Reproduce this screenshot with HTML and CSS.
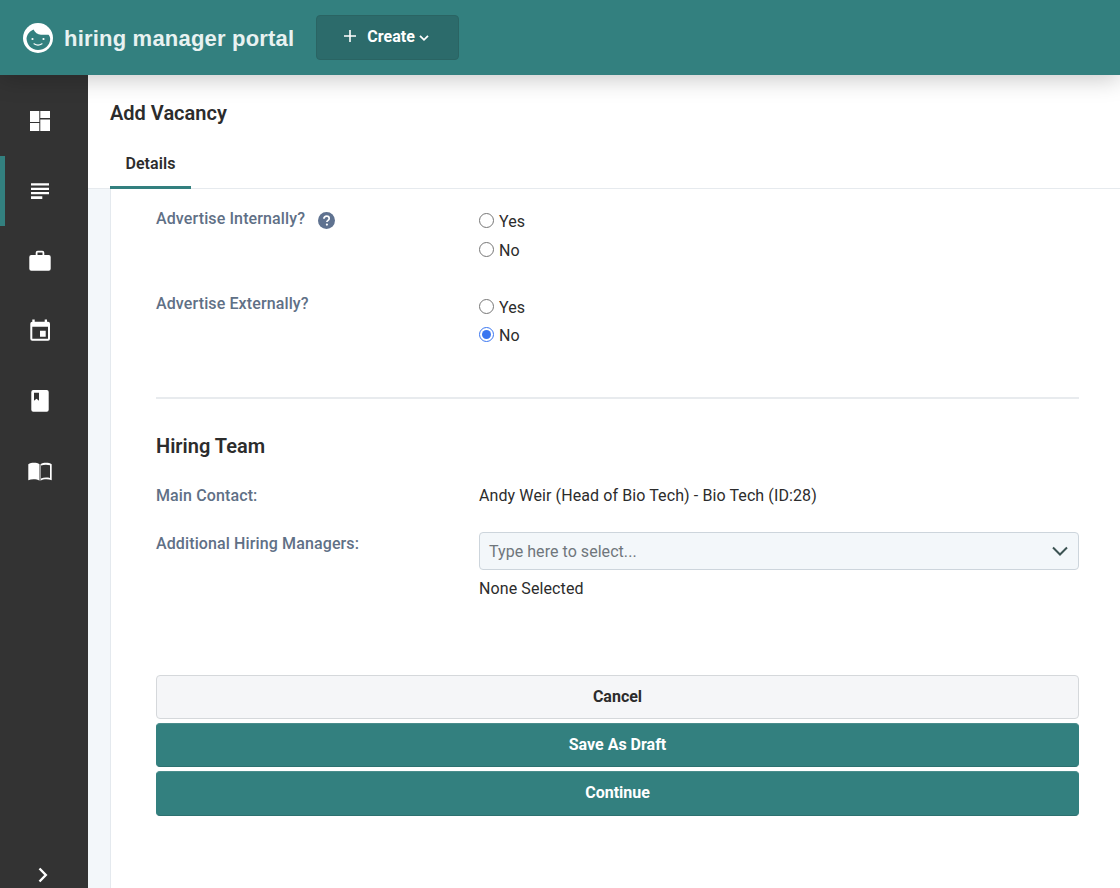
FILE: index.html
```html
<!DOCTYPE html>
<html lang="en">
<head>
<meta charset="utf-8">
<title>Add Vacancy</title>
<link rel="stylesheet" href="styles.css">
</head>
<body>
<header class="topbar">
  <div class="brand">
    <svg class="logo" viewBox="0 0 30 30" width="30" height="30" aria-hidden="true">
      <circle cx="15" cy="15" r="15" fill="#fff"/>
      <path d="M3.500 15.500C4 11 7 8 10.500 6.500 12 9.500 14.500 11.500 18 11.800c3 .2 5.500-.2 7.500 0 1.200 1.400 1.700 2.800 1.700 4.200C27 22.500 21.500 27 15 27S3.800 22 3.500 15.500z" fill="#33807f"/>
      <circle cx="9.500" cy="16" r="1.100" fill="#fff"/>
      <circle cx="20.500" cy="16" r="1.100" fill="#fff"/>
      <path d="M11 20.800c2.300 1.500 5.700 1.500 8 0" fill="none" stroke="#fff" stroke-width="1.200" stroke-linecap="round"/>
    </svg>
    <span class="brand-name">hiring manager portal</span>
  </div>
  <button class="create" type="button">
    <svg viewBox="0 0 14 14" width="14" height="14" aria-hidden="true"><path d="M7 1v12M1 7h12" stroke="#fff" stroke-width="1.600" fill="none"/></svg>
    <span>Create</span>
    <svg viewBox="0 0 10 8" width="10" height="8" aria-hidden="true"><path d="M1 1.800l4 4 4-4" stroke="#fff" stroke-width="1.800" fill="none"/></svg>
  </button>
</header>
<div class="shell">
  <nav class="sidebar">
    <a class="nav-item"><svg viewBox="0 0 24 24" width="24" height="24"><path d="M2 2h9.300v11H2zM2 14h9.300v8H2zM12.300 2H22v7h-9.700zM12.300 10.500H22V22h-9.700z" fill="#fff"/></svg></a>
    <a class="nav-item active"><svg viewBox="0 0 24 24" width="24" height="24"><path d="M3 4.300h18v2.200H3zM3 8.700h18v2.200H3zM3 13h18v2.200H3zM3 17.300h11.300v2.700H3z" fill="#fff"/></svg></a>
    <a class="nav-item"><svg viewBox="0 0 24 24" width="24" height="24"><path d="M7.700 6V3.700a2 2 0 0 1 2-2h4.600a2 2 0 0 1 2 2V6h4.400a2 2 0 0 1 2 2v11.700a2 2 0 0 1-2 2H3.300a2 2 0 0 1-2-2V8a2 2 0 0 1 2-2zm1.800 0h5V3.500h-5z" fill="#fff" fill-rule="evenodd"/></svg></a>
    <a class="nav-item"><svg viewBox="0 0 24 24" width="24" height="24"><path d="M4.300.5h2.400v2.200h10V.5H19v2.200h1a2 2 0 0 1 2 2v15a2 2 0 0 1-2 2H4.300a2 2 0 0 1-2-2v-15a2 2 0 0 1 2-2zm0 7.200v12H20v-12zM12 11.700h5.700v6H12z" fill="#fff" fill-rule="evenodd"/></svg></a>
    <a class="nav-item"><svg viewBox="0 0 24 24" width="24" height="24"><path d="M5.300 1h13.400a2 2 0 0 1 2 2v17.700a2 2 0 0 1-2 2H5.300a2 2 0 0 1-2-2V3a2 2 0 0 1 2-2zM6 3.700v8l2.500-2 2.500 2v-8z" fill="#fff" fill-rule="evenodd"/></svg></a>
    <a class="nav-item"><svg viewBox="0 0 24 24" width="24" height="24"><path d="M.3 5.200C3.500 3.300 8.500 3.300 11.500 5.200V21.700C8.500 20 3.500 20 .3 21.300zM12.500 5.200C15.500 3.300 20.500 3.300 23.700 5.200V21.300C20.500 20 15.500 20 12.500 21.700zM13 6.500V19.500C15.500 18.300 19 18.300 22 18.900V6.200C19 5.300 15.500 5.500 13 6.500z" fill="#fff" fill-rule="evenodd"/></svg></a>
    <a class="nav-toggle"><svg viewBox="0 0 12 16" width="12" height="16"><path d="M2.500 1.500l6.300 6.500-6.300 6.500" stroke="#fff" stroke-width="2.400" fill="none"/></svg></a>
  </nav>
  <main class="content">
    <div class="page-head">
      <h1 class="page-title">Add Vacancy</h1>
      <div class="tabs"><a class="tab">Details</a></div>
    </div>
    <div class="page-body">
      <form class="panel">
        <div class="field field-first">
          <div class="label">Advertise Internally?<svg class="help" viewBox="0 0 17 17" width="17" height="17"><circle cx="8.500" cy="8.500" r="8.500" fill="#5f7290"/><path d="M5.900 6.700c0-1.600 1.200-2.500 2.700-2.500s2.600.9 2.600 2.200c0 1.200-.8 1.700-1.500 2.200-.6.400-.8.700-.8 1.300" fill="none" stroke="#fff" stroke-width="1.700"/><circle cx="8.900" cy="12.600" r="1.100" fill="#fff"/></svg></div>
          <div class="radios">
            <label class="radio"><input type="radio" name="internal"> Yes</label>
            <label class="radio"><input type="radio" name="internal"> No</label>
          </div>
        </div>
        <div class="field field-second">
          <div class="label">Advertise Externally?</div>
          <div class="radios">
            <label class="radio"><input type="radio" name="external"> Yes</label>
            <label class="radio"><input type="radio" name="external" checked> No</label>
          </div>
        </div>
        <hr class="divider">
        <h2 class="section-title">Hiring Team</h2>
        <div class="field field-contact">
          <div class="label">Main Contact:</div>
          <div class="value">Andy Weir (Head of Bio Tech) - Bio Tech (ID:28)</div>
        </div>
        <div class="field field-managers">
          <div class="label">Additional Hiring Managers:</div>
          <div class="control">
            <div class="select">
              <span>Type here to select...</span>
              <svg viewBox="0 0 16 10" width="16" height="10"><path d="M1 1.500l7 7 7-7" stroke="#3c5353" stroke-width="2" fill="none"/></svg>
            </div>
            <div class="value none">None Selected</div>
          </div>
        </div>
        <div class="actions">
          <button class="btn btn-light" type="button">Cancel</button>
          <button class="btn btn-primary" type="button">Save As Draft</button>
          <button class="btn btn-primary btn-tall" type="button">Continue</button>
        </div>
      </form>
    </div>
  </main>
</div>
</body>
</html>
```
FILE: styles.css
```css
* { box-sizing: border-box; }
html, body { margin: 0; height: 100%; overflow: hidden; }
body {
  font-family: Roboto, "Liberation Sans", sans-serif;
  font-size: 16px;
  color: #2c2c2c;
  background: #fff;
  display: flex;
  flex-direction: column;
}
.topbar {
  height: 75px;
  flex: none;
  background: #33807f;
  display: flex;
  align-items: center;
  padding-left: 23px;
  box-shadow: 0 4px 22px rgba(0,0,0,.22);
  position: relative;
  z-index: 2;
}
.brand { display: flex; align-items: center; gap: 11px; }
.logo { display: block; }
.brand-name {
  font-family: "Liberation Sans", Arial, sans-serif;
  font-size: 22px;
  font-weight: 700;
  color: #e8f2f1;
  letter-spacing: .2px;
  padding-top: 2px;
}
.create {
  margin-left: 22px;
  width: 143px;
  height: 45px;
  margin-top: -1px;
  display: flex;
  align-items: center;
  padding: 0 0 2px 26px;
  background: #2c6b6b;
  border: 1px solid #2a6463;
  border-radius: 4px;
  color: #fff;
  font: 700 16px Roboto, sans-serif;
}
.create span { margin: 0 4px 0 10px; }
.create svg:last-child { margin-top: 3px; }
.shell { flex: 1; display: flex; min-height: 0; }
.sidebar {
  width: 88px;
  flex: none;
  background: #333;
  display: flex;
  flex-direction: column;
  padding-top: 11px;
}
.nav-item {
  height: 70px;
  display: flex;
  align-items: center;
  justify-content: center;
  border-left: 5px solid transparent;
  padding-right: 13px;
}
.nav-item svg { display: block; }
.nav-item.active { border-left-color: #33807f; }
.nav-toggle { margin-top: auto; padding: 3px 0 0 37px; height: 24px; }
.nav-toggle svg { display: block; }
.content { flex: 1; min-width: 0; display: flex; flex-direction: column; }
.page-head {
  height: 114px;
  flex: none;
  border-bottom: 1px solid #e6eaee;
  padding-left: 22px;
}
.page-title {
  margin: 0;
  padding-top: 25px;
  font-size: 20px;
  line-height: 27px;
  font-weight: 600;
}
.tabs { display: flex; margin-top: 24px; }
.tab {
  width: 81px;
  height: 38px;
  text-align: center;
  font-size: 16px;
  font-weight: 600;
  letter-spacing: .1px;
  line-height: 25px;
  border-bottom: 3px solid #33807f;
}
.page-body { flex: 1; min-height: 0; background: #f3f7fa; padding-left: 22px; }
.panel {
  height: 100%;
  background: #fff;
  border-left: 1px solid #e4e9ee;
  padding: 0 41px 0 45px;
}
.field { display: flex; }
.field-first { padding-top: 20px; height: 105px; }
.label {
  width: 323px;
  flex: none;
  color: #5f7086;
  font-size: 16px;
  font-weight: 500;
  letter-spacing: .12px;
  line-height: 20px;
}
.help { vertical-align: -5px; margin-left: 13px; }
.radios { display: flex; flex-direction: column; gap: 8px; margin-top: 2px; }
.field-second .radios { gap: 7px; margin-top: 3px; }
.radio { display: flex; align-items: center; gap: 5px; height: 21px; font-size: 16px; letter-spacing: .1px; }
.radio input { margin: 0 0 2px; width: 15px; height: 15px; accent-color: #3a76f0; }
.divider { border: 0; border-top: 2px solid #e8ebee; margin: 51px 0 0; }
.section-title { margin: 0; padding-top: 34px; font-size: 20px; line-height: 27px; font-weight: 600; }
.field-contact { margin-top: 26px; line-height: 20px; }
.value { font-size: 16px; letter-spacing: .1px; line-height: 20px; }
.field-managers { margin-top: 28px; }
.control { flex: 1; margin-top: -2px; }
.select {
  height: 38px;
  display: flex;
  align-items: center;
  justify-content: space-between;
  padding: 0 10px 0 9px;
  background: #f3f7fa;
  border: 1px solid #cdd5dc;
  border-radius: 4px;
  color: #6f767c;
  letter-spacing: .05px;
}
.none { margin-top: 9px; }
.actions { display: flex; flex-direction: column; gap: 4px; margin-top: 76px; }
.btn {
  height: 44px;
  padding: 0 0 2px;
  border-radius: 4px;
  font: 700 16px Roboto, sans-serif;
  width: 100%;
}
.btn-light { background: #f5f6f8; border: 1px solid #d5d8db; color: #2c2c2c; }
.btn-primary { background: #33807f; border: 1px solid #33807f; border-top-color: #4a8d8c; border-bottom-color: #2d7170; color: #fff; }
.btn-tall { height: 45px; }
```
